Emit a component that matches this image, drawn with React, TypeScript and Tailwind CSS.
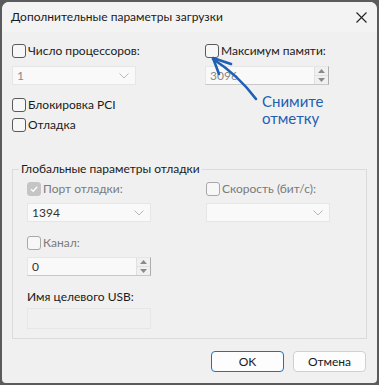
import { ReactNode } from 'react';

const font = { fontFamily: 'Lato, "Noto Sans", sans-serif' };

const Box = ({ checked, disabled }: { checked?: boolean; disabled?: boolean }) => (
    <span
        className={`flex h-[14px] w-[14px] shrink-0 items-center justify-center rounded-[3px] border ${
            checked ? 'border-[#c5c5c5] bg-[#c5c5c5]' : disabled ? 'border-[#a8a8a8] bg-[#f7f7f7]' : 'border-[#5a5a5a] bg-[#f7f7f7]'
        }`}
    >
        {checked && (
            <svg width="10" height="10" viewBox="0 0 10 10">
                <path d="M2 5.2 L4.2 7.3 L8.2 2.8" fill="none" stroke="#fff" strokeWidth="1.3" />
            </svg>
        )}
    </span>
);

const Check = ({ label, checked, disabled }: { label: string; checked?: boolean; disabled?: boolean }) => (
    <div className="flex h-4 items-center gap-[2px]">
        <Box checked={checked} disabled={disabled} />
        <span className={`text-[12px] leading-4 ${disabled ? 'text-[#7a7a7a]' : 'text-[#1a1a1a]'}`}>{label}</span>
    </div>
);

const Combo = ({ value, dark }: { value?: string; dark?: boolean }) => (
    <div className="flex h-[19px] w-[124px] items-center justify-between border border-[#e6e6e6] bg-[#f9f9f9] pl-[4px] pr-[6px]">
        <span className={`text-[12px] leading-4 ${dark ? 'text-[#333]' : 'text-[#8a8a8a]'}`}>{value}</span>
        <svg width="10" height="6" viewBox="0 0 10 6">
            <path d="M0.5 0.5 L5 5 L9.5 0.5" fill="none" stroke="#b8b8b8" strokeWidth="1" />
        </svg>
    </div>
);

const Spin = ({ value, dark }: { value: string; dark?: boolean }) => (
    <div className="flex h-[19px] w-[124px] border border-[#adadad] border-l-[#e6e6e6] border-t-[#e6e6e6] border-b-[#c8c8c8] bg-[#f9f9f9]">
        <span className={`flex-1 pl-[4px] text-[12px] leading-[17px] ${dark ? 'text-[#333]' : 'text-[#8a8a8a]'}`}>{value}</span>
        <div className="flex w-[14px] flex-col border-l border-[#e0e0e0] bg-[#f0f0f0]">
            <div className="flex flex-1 items-center justify-center border-b border-[#e0e0e0]">
                <svg width="7" height="4" viewBox="0 0 7 4">
                    <path d="M0 4 L3.5 0 L7 4 Z" fill="#8a8a8a" />
                </svg>
            </div>
            <div className="flex flex-1 items-center justify-center">
                <svg width="7" height="4" viewBox="0 0 7 4">
                    <path d="M0 0 L3.5 4 L7 0 Z" fill="#8a8a8a" />
                </svg>
            </div>
        </div>
    </div>
);

const Btn = ({ children, primary }: { children: ReactNode; primary?: boolean }) => (
    <button
        className={`flex h-[21px] w-[73px] items-center justify-center rounded-[4px] border bg-[#fdfdfd] text-[12px] text-[#1a1a1a] ${
            primary ? 'border-[#1b6fc4]' : 'border-[#d0d0d0]'
        }`}
    >
        {children}
    </button>
);

export default function App() {
    return (
        <div className="h-[385px] w-[379px] bg-[#5b5b5b] p-[2px]" style={font}>
            <div className="relative flex h-[381px] flex-col overflow-hidden rounded-t-[7px] rounded-b-[4px] bg-[#f0f0f0]">
                {/* title bar */}
                <div className="flex h-[30px] shrink-0 items-center justify-between bg-[#f3f3f3] pl-[9px] pr-[10px]">
                    <span className="text-[12px] text-[#1a1a1a]">Дополнительные параметры загрузки</span>
                    <svg width="11" height="11" viewBox="0 0 11 11">
                        <path d="M0.5 0.5 L10.5 10.5 M10.5 0.5 L0.5 10.5" stroke="#222" strokeWidth="1.1" />
                    </svg>
                </div>

                <div className="flex flex-1 flex-col px-[10px] pt-[11px]">
                    <div className="grid grid-cols-[193px_1fr]">
                        <div className="flex flex-col">
                            <Check label="Число процессоров:" />
                            <div className="mt-[7px]">
                                <Combo value="1" />
                            </div>
                            <div className="mt-[12px]">
                                <Check label="Блокировка PCI" />
                            </div>
                            <div className="mt-[4px]">
                                <Check label="Отладка" />
                            </div>
                        </div>
                        <div className="flex flex-col">
                            <Check label="Максимум памяти:" />
                            <div className="mt-[7px]">
                                <Spin value="3096" />
                            </div>
                        </div>
                    </div>

                    {/* group box */}
                    <div className="relative mt-[36px] h-[170px] border border-[#dcdcdc] pl-[14px] pt-[11px]">
                        <span className="absolute -top-[9px] left-[6px] bg-[#f0f0f0] px-[2px] text-[12px] leading-4 text-[#1a1a1a]">
                            Глобальные параметры отладки
                        </span>
                        <div className="grid grid-cols-[179px_1fr]">
                            <div className="flex flex-col">
                                <Check label="Порт отладки:" checked disabled />
                                <div className="mt-[6px]">
                                    <Combo value="1394" dark />
                                </div>
                                <div className="mt-[13px]">
                                    <Check label="Канал:" disabled />
                                </div>
                                <div className="mt-[6px]">
                                    <Spin value="0" dark />
                                </div>
                                <span className="mt-[13px] text-[12px] leading-4 text-[#1a1a1a]">Имя целевого USB:</span>
                                <div className="mt-[3px] h-[21px] w-[124px] border border-[#e6e6e6] bg-[#f0f0f0]" />
                            </div>
                            <div className="flex flex-col">
                                <Check label="Скорость (бит/с):" disabled />
                                <div className="mt-[6px]">
                                    <Combo />
                                </div>
                            </div>
                        </div>
                    </div>

                    <div className="mt-[12px] flex justify-end gap-[9px] pr-[1px]">
                        <Btn primary>OK</Btn>
                        <Btn>Отмена</Btn>
                    </div>
                </div>

                {/* annotation */}
                <svg className="absolute left-0 top-0" width="375" height="381" viewBox="2 2 375 381">
                    <path d="M256 99 Q238 75 213 59" fill="none" stroke="#1f5fb4" strokeWidth="2.6" strokeLinecap="round" />
                    <path d="M213 58 L231 64 M213 58 L219 74" fill="none" stroke="#1f5fb4" strokeWidth="2.6" strokeLinecap="round" />
                </svg>
                <div className="absolute left-[260px] top-[91px] text-[15px] leading-[17px] text-[#1f5fb4]">
                    Снимите
                    <br />
                    отметку
                </div>
            </div>
        </div>
    );
}
